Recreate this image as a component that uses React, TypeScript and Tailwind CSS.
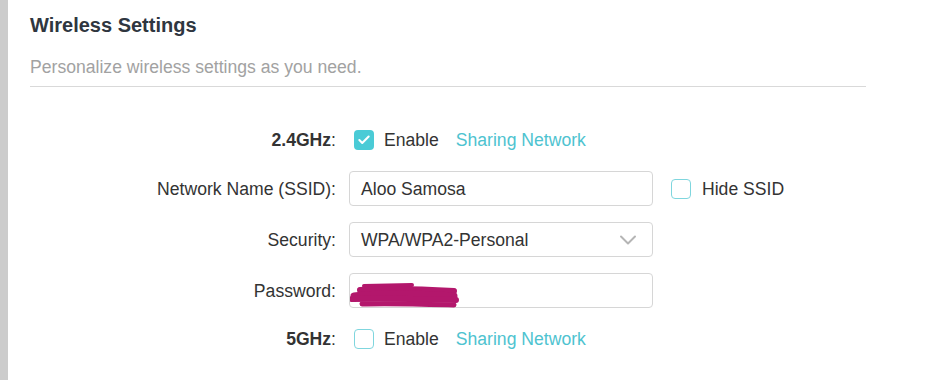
import { Check, ChevronDown } from "lucide-react";

const FONT = { fontFamily: '"Liberation Sans", Arial, sans-serif' };

function Box({ checked }: { checked?: boolean }) {
    return checked ? (
        <span className="flex h-5 w-5 shrink-0 items-center justify-center rounded-[4px] bg-[#4acbd6]">
            <Check className="h-3.5 w-3.5 text-white" strokeWidth={3.5} />
        </span>
    ) : (
        <span className="block h-5 w-5 shrink-0 rounded-[4px] border-[1.5px] border-[#7fd6de] bg-white" />
    );
}

function Row({ label, bold, children, className }: { label: string; bold?: boolean; children: React.ReactNode; className?: string }) {
    return (
        <div className={`flex h-[35px] items-center ${className ?? ""}`}>
            <div className="w-[306px] shrink-0 text-right text-[#333]">
                {bold ? <span className="font-bold">{label}</span> : label}:
            </div>
            <div className="ml-[13px] flex items-center">{children}</div>
        </div>
    );
}

function Scribble() {
    return (
        <svg width="110" height="30" viewBox="0 0 110 30" className="absolute left-0 top-[6px]">
            <g stroke="#b3176c" strokeLinecap="round" fill="none">
                <path d="M14 6 L62 5" strokeWidth="4" />
                <path d="M10 10 C40 8 70 9 104 11" strokeWidth="6" />
                <path d="M4 16 C30 13 70 14 104 16" strokeWidth="7" />
                <path d="M2 19 C40 18 70 19 106 20" strokeWidth="6" />
                <path d="M12 24 C40 23 70 24 104 25" strokeWidth="5" />
            </g>
        </svg>
    );
}

export default function App() {
    return (
        <div className="flex h-[380px] w-[926px] bg-white text-[17.6px] leading-[20px]" style={FONT}>
            <div className="w-2 shrink-0 bg-[#cccccc]" />
            <div className="flex-1 pl-[22px] pt-[13px]">
                <h1 className="text-[20px] font-bold leading-[24px] text-[#2f3640]">Wireless Settings</h1>
                <p className="mt-[20px] text-[#a2a2a2]">Personalize wireless settings as you need.</p>
                <div className="mt-[9px] h-px w-[836px] bg-[#d9d9d9]" />

                <div className="mt-[35px] flex flex-col">
                    <Row label="2.4GHz" bold>
                        <span className="ml-[5px]"><Box checked /></span>
                        <span className="ml-[10px] text-[#333]">Enable</span>
                        <span className="ml-[17px] text-[#4ec3d0]">Sharing Network</span>
                    </Row>
                    <Row label="Network Name (SSID)" className="mt-[14px]">
                        <div className="flex h-[35px] w-[304px] items-center rounded-[4px] border border-[#d6d6d6] px-[11px] text-[#333]">
                            Aloo Samosa
                        </div>
                        <span className="ml-[18px]"><Box /></span>
                        <span className="ml-[11px] text-[#333]">Hide SSID</span>
                    </Row>
                    <Row label="Security" className="mt-[16px]">
                        <div className="flex h-[35px] w-[304px] items-center justify-between rounded-[4px] border border-[#d6d6d6] pl-[11px] pr-[10px] text-[#333]">
                            WPA/WPA2-Personal
                            <ChevronDown className="h-7 w-7 text-[#b5b5b5]" strokeWidth={1.7} />
                        </div>
                    </Row>
                    <Row label="Password" className="mt-[16px]">
                        <div className="relative h-[35px] w-[304px] rounded-[4px] border border-[#d6d6d6]">
                            <Scribble />
                        </div>
                    </Row>
                    <Row label="5GHz" bold className="mt-[13px]">
                        <span className="ml-[5px]"><Box /></span>
                        <span className="ml-[10px] text-[#333]">Enable</span>
                        <span className="ml-[17px] text-[#4ec3d0]">Sharing Network</span>
                    </Row>
                </div>
            </div>
        </div>
    );
}
